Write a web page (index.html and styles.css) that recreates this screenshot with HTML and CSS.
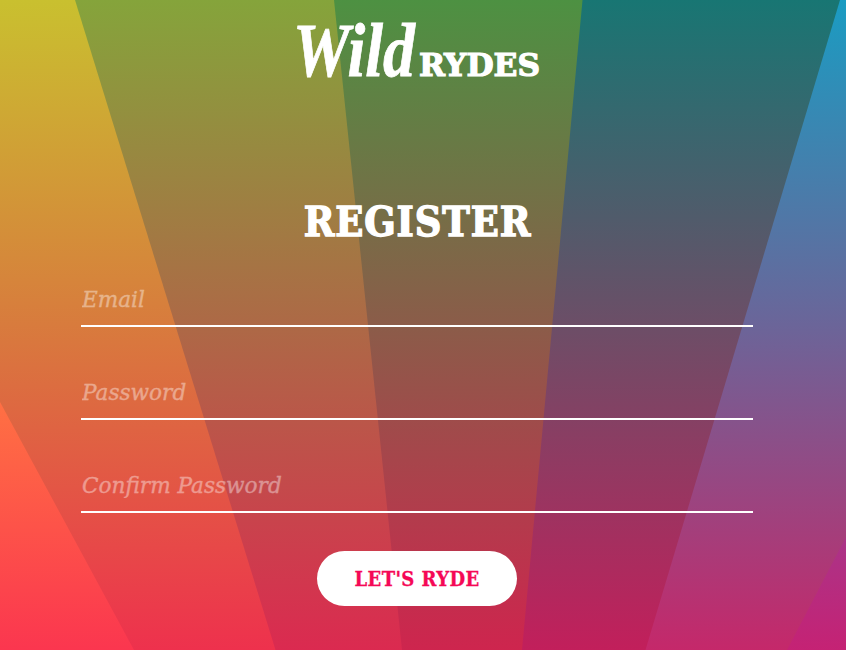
FILE: index.html
```html
<!DOCTYPE html>
<html lang="en">
<head>
<meta charset="utf-8">
<title>Wild Rydes - Register</title>
<link rel="stylesheet" href="styles.css">
</head>
<body>
<svg class="rays" viewBox="0 0 846 650" preserveAspectRatio="none" aria-hidden="true">
  <defs>
    <linearGradient id="yellow" gradientUnits="userSpaceOnUse" x1="0" y1="0" x2="0" y2="650"><stop offset="0" stop-color="#c9c02f"/><stop offset=".5" stop-color="#d87b3d"/><stop offset="1" stop-color="#ee314d"/></linearGradient>
    <linearGradient id="olive" gradientUnits="userSpaceOnUse" x1="0" y1="0" x2="0" y2="650"><stop offset="0" stop-color="#85a43b"/><stop offset=".5" stop-color="#ad6946"/><stop offset="1" stop-color="#db2a50"/></linearGradient>
    <linearGradient id="green" gradientUnits="userSpaceOnUse" x1="0" y1="0" x2="0" y2="650"><stop offset="0" stop-color="#4d9142"/><stop offset=".5" stop-color="#8b5c49"/><stop offset="1" stop-color="#ce254e"/></linearGradient>
    <linearGradient id="teal" gradientUnits="userSpaceOnUse" x1="0" y1="0" x2="0" y2="650"><stop offset="0" stop-color="#187673"/><stop offset=".5" stop-color="#6c4e67"/><stop offset="1" stop-color="#c21f5b"/></linearGradient>
    <linearGradient id="blue" gradientUnits="userSpaceOnUse" x1="0" y1="0" x2="0" y2="650"><stop offset="0" stop-color="#1a9cc2"/><stop offset=".5" stop-color="#6b6599"/><stop offset="1" stop-color="#c5286a"/></linearGradient>
    <linearGradient id="coral" gradientUnits="userSpaceOnUse" x1="0" y1="402" x2="0" y2="650"><stop offset="0" stop-color="#ff7043"/><stop offset="1" stop-color="#fb364f"/></linearGradient>
    <linearGradient id="violet" gradientUnits="userSpaceOnUse" x1="0" y1="537" x2="0" y2="650"><stop offset="0" stop-color="#aa3488"/><stop offset="1" stop-color="#c52274"/></linearGradient>
  </defs>
  <path fill="url(#yellow)" d="M0 0H846V650H0Z"/>
  <path fill="url(#olive)" d="M75 0H846V650H275.500Z"/>
  <path fill="url(#green)" d="M334 0H846V650H402Z"/>
  <path fill="url(#teal)" d="M582.500 0H846V650H522Z"/>
  <path fill="url(#blue)" d="M840 0H846V650H645.500Z"/>
  <path fill="url(#coral)" d="M0 402L134 650H0Z"/>
  <path fill="url(#violet)" d="M846 537V650H787Z"/>
</svg>
<div class="page">
  <header class="header">
    <svg class="logo" viewBox="0 0 250 100" role="img" aria-label="Wild Rydes">
      <text class="logo-script" x="1" y="76" textLength="122" lengthAdjust="spacingAndGlyphs">Wild</text>
      <text class="logo-slab" x="127" y="76" textLength="121" lengthAdjust="spacingAndGlyphs">RYDES</text>
    </svg>
  </header>
  <main>
    <h1 class="title">REGISTER</h1>
    <form class="form">
      <input class="field" type="email" placeholder="Email">
      <input class="field" type="password" placeholder="Password">
      <input class="field" type="password" placeholder="Confirm Password">
      <button class="submit" type="button">LET'S RYDE</button>
    </form>
  </main>
</div>
</body>
</html>
```
FILE: styles.css
```css
* {
  box-sizing: border-box;
}

body {
  margin: 0;
  height: 650px;
  overflow: hidden;
  color: #fff;
  font-family: "DejaVu Serif", serif;
}

.rays {
  position: absolute;
  inset: 0;
  width: 100%;
  height: 100%;
  z-index: -1;
}

.page {
  width: 834px;
}

.header {
  display: flex;
  justify-content: center;
}

.logo {
  width: 250px;
  height: 100px;
  overflow: visible;
}

.logo text {
  fill: #fff;
  stroke: #fff;
  font-weight: 700;
}

.logo-script {
  font-family: "Liberation Serif", serif;
  font-size: 77px;
  font-style: italic;
  stroke-width: 0.8px;
}

.logo-slab {
  font-family: "DejaVu Serif", serif;
  font-size: 32px;
  stroke-width: 1.2px;
}

.title {
  margin: 97px 0 0;
  height: 50px;
  line-height: 50px;
  text-align: center;
  font-family: "DejaVu Serif Condensed", "DejaVu Serif", serif;
  font-stretch: condensed;
  font-size: 41px;
  font-weight: 700;
  letter-spacing: 0.9px;
  text-indent: 0.9px;
  -webkit-text-stroke: 1.3px #fff;
}

.form {
  display: flex;
  flex-direction: column;
  align-items: center;
  margin-top: 25px;
}

.field {
  width: 672px;
  height: 55px;
  margin: 0 0 38px;
  padding: 2px 1px 0;
  border: 0;
  border-bottom: 2px solid #fff;
  outline: 0;
  background: transparent;
  color: #fff;
  font-family: inherit;
  font-size: 21.600px;
  font-style: italic;
}

.field::placeholder {
  color: #fff;
  opacity: 0.4;
  -webkit-text-stroke: 0.3px #fff;
}

.submit {
  width: 200px;
  height: 55px;
  padding: 0;
  border: 0;
  border-radius: 28px;
  background: #fff;
  color: #f50856;
  font-family: "DejaVu Serif Condensed", "DejaVu Serif", serif;
  font-stretch: condensed;
  font-size: 20px;
  font-weight: 700;
  letter-spacing: 0.400px;
  -webkit-text-stroke: 0.3px #f50856;
}
```
